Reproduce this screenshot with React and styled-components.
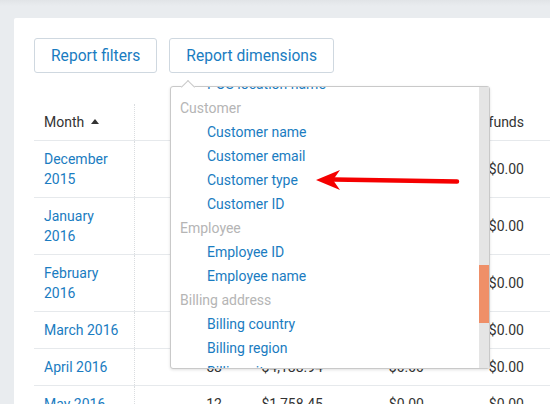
import React from "react";
import styled, { createGlobalStyle } from "styled-components";

const GlobalStyle = createGlobalStyle`
  html, body {
    margin: 0;
    padding: 0;
    background: #e9ecef;
    overflow: hidden;
  }
  body {
    font-family: Roboto, "Liberation Sans", Arial, sans-serif;
    font-size: 14px;
    color: #333;
  }
`;

const Page = styled.div`
  position: relative;
  width: 550px;
  height: 404px;
  overflow: hidden;
  background: linear-gradient(#e1e4e7 0px, #e9ecef 6px);
  padding: 18px 0 0 14px;
  box-sizing: border-box;
`;

const Card = styled.div`
  background: #fff;
  width: 600px;
  min-height: 420px;
  padding: 20px;
  box-sizing: border-box;
  border-radius: 2px;
`;

const Toolbar = styled.div`
  position: relative;
  display: flex;
  gap: 12px;
`;

const ToolButton = styled.button`
  height: 35px;
  padding: 0 16px;
  background: #fff;
  border: 1px solid #cfd8e0;
  border-radius: 3px;
  color: #1a7cc1;
  font-family: Roboto, "Liberation Sans", Arial, sans-serif;
  font-size: 15.6px;
  cursor: pointer;
`;

const Table = styled.table`
  margin-top: 31px;
  border-collapse: collapse;
  table-layout: fixed;
  width: 560px;
`;

const Th = styled.th`
  font-weight: 400;
  text-align: ${(p) => (p.$first ? "left" : "right")};
  padding: 8px 10px;
  line-height: 20px;
  color: #333;
  border-bottom: 1px solid #e6e9ec;
  border-right: ${(p) => (p.$first ? "1px dotted #dadde0" : "none")};
  width: ${(p) => p.$w}px;
  box-sizing: border-box;
`;

const Td = styled.td`
  text-align: ${(p) => (p.$first ? "left" : "right")};
  padding: 8px 10px;
  line-height: 20px;
  color: #333;
  vertical-align: middle;
  border-bottom: 1px solid #e6e9ec;
  border-right: ${(p) => (p.$first ? "1px dotted #dadde0" : "none")};
`;

const MonthLink = styled.a`
  color: #1a7cc1;
  text-decoration: none;
`;

const SortUp = styled.span`
  display: inline-block;
  margin-left: 7px;
  vertical-align: middle;
  position: relative;
  top: -2px;
  border-left: 4.5px solid transparent;
  border-right: 4.5px solid transparent;
  border-bottom: 5px solid #333;
`;

const Dropdown = styled.div`
  position: absolute;
  left: 136px;
  top: 48px;
  width: 320px;
  height: 283px;
  display: flex;
  background: #fff;
  border: 1px solid #c9c9c9;
  border-radius: 3px;
  box-shadow: 0 1px 3px rgba(0, 0, 0, 0.12);
  box-sizing: border-box;

  &::before {
    content: "";
    position: absolute;
    left: 12px;
    top: -5px;
    width: 9px;
    height: 9px;
    background: #fff;
    border-left: 1px solid #c9c9c9;
    border-top: 1px solid #c9c9c9;
    transform: rotate(45deg);
  }
`;

const Viewport = styled.div`
  flex: 1;
  overflow: hidden;
  position: relative;
`;

const OptionList = styled.ul`
  list-style: none;
  margin: -15px 0 0;
  padding: 0;
`;

const GroupLabel = styled.li`
  line-height: 24px;
  padding-left: 9px;
  color: #b5b5b5;
  white-space: nowrap;
`;

const Option = styled.li`
  line-height: 24px;
  padding-left: 36px;
  color: #1a7cc1;
  white-space: nowrap;
`;

const Track = styled.div`
  width: 10px;
  background: #e5e5e5;
  display: flex;
  flex-direction: column;
`;

const Thumb = styled.div`
  margin-top: 178px;
  height: 58px;
  background: #ef8f68;
`;

const Pointer = styled.svg`
  position: absolute;
  left: 310px;
  top: 164px;
  overflow: visible;
`;

const options = [
  { item: "POS location name" },
  { group: "Customer" },
  { item: "Customer name" },
  { item: "Customer email" },
  { item: "Customer type" },
  { item: "Customer ID" },
  { group: "Employee" },
  { item: "Employee ID" },
  { item: "Employee name" },
  { group: "Billing address" },
  { item: "Billing country" },
  { item: "Billing region" },
  { item: "Billing city" },
  { item: "Billing postal code" },
];

const rows = [
  ["December 2015", "15", "$2,140.20", "$0.00", "$0.00"],
  ["January 2016", "21", "$2,874.10", "$0.00", "$0.00"],
  ["February 2016", "19", "$2,310.55", "$0.00", "$0.00"],
  ["March 2016", "44", "$3,902.70", "$0.00", "$0.00"],
  ["April 2016", "58", "$4,188.94", "$0.00", "$0.00"],
  ["May 2016", "12", "$1,758.45", "$0.00", "$0.00"],
];

const columns = [
  { label: "Month", w: 100 },
  { label: "Orders", w: 98 },
  { label: "Sales", w: 101 },
  { label: "Discounts", w: 101 },
  { label: "Refunds", w: 100 },
  { label: "Net sales", w: 60 },
];

export default function App() {
  return (
    <>
      <GlobalStyle />
      <Page>
        <Card>
          <Toolbar>
            <ToolButton>Report filters</ToolButton>
            <ToolButton>Report dimensions</ToolButton>
            <Dropdown>
              <Viewport>
                <OptionList>
                  {options.map((o, i) =>
                    o.group ? (
                      <GroupLabel key={i}>{o.group}</GroupLabel>
                    ) : (
                      <Option key={i}>{o.item}</Option>
                    )
                  )}
                </OptionList>
              </Viewport>
              <Track>
                <Thumb />
              </Track>
            </Dropdown>
          </Toolbar>
          <Table>
            <thead>
              <tr>
                {columns.map((c, i) => (
                  <Th key={c.label} $first={i === 0} $w={c.w}>
                    {i < 5 ? c.label : ""}
                    {i === 0 && <SortUp />}
                  </Th>
                ))}
              </tr>
            </thead>
            <tbody>
              {rows.map((r) => (
                <tr key={r[0]}>
                  <Td $first>
                    <MonthLink href="#">{r[0]}</MonthLink>
                  </Td>
                  {r.slice(1).map((v, j) => (
                    <Td key={j}>{v}</Td>
                  ))}
                  <Td />
                </tr>
              ))}
            </tbody>
          </Table>
        </Card>
        <Pointer width="155" height="32" viewBox="0 0 155 32">
          <line
            x1="24"
            y1="15.6"
            x2="147"
            y2="17.4"
            stroke="#f50000"
            strokeWidth="4.5"
            strokeLinecap="round"
          />
          <polygon points="6,16 30,6 23,16 30,26" fill="#f50000" />
        </Pointer>
      </Page>
    </>
  );
}
